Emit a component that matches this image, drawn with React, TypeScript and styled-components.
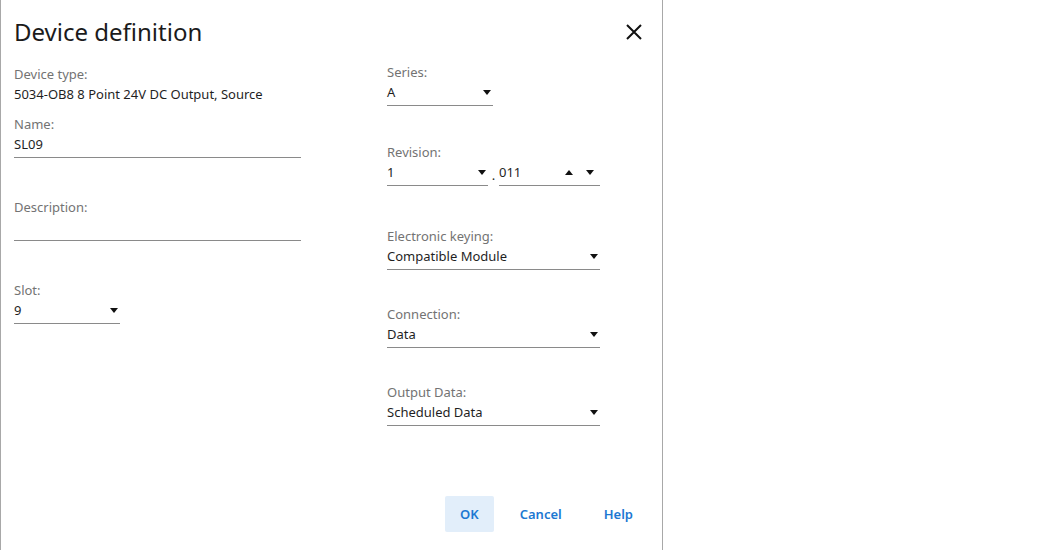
import styled, { createGlobalStyle } from 'styled-components'

const GlobalStyle = createGlobalStyle`
    html, body {
        margin: 0;
        padding: 0;
        background: #fff;
    }
    body {
        font-family: 'Noto Sans', 'Open Sans', sans-serif;
        color: #1f1f1f;
    }
`

const Dialog = styled.div`
    width: 663px;
    height: 550px;
    border-left: 1px solid #a8a8a8;
    border-right: 1px solid #a8a8a8;
    display: flex;
    flex-direction: column;
    box-sizing: border-box;
`

const Header = styled.div`
    height: 64px;
    display: flex;
    align-items: center;
    justify-content: space-between;
    padding: 0 17px 0 13px;
`

const Title = styled.h1`
    margin: 0;
    font-size: 24px;
    font-weight: 400;
    color: #1b1b1b;
    line-height: 30px;
`

const CloseButton = styled.button`
    border: 0;
    background: none;
    padding: 0;
    width: 22px;
    height: 22px;
    display: flex;
    align-items: center;
    justify-content: center;
    cursor: pointer;
`

const Body = styled.div`
    flex: 1;
    display: grid;
    grid-template-columns: 373px 213px;
    padding-left: 13px;
`

const Column = styled.div`
    display: flex;
    flex-direction: column;
`

const Field = styled.div<{ $top: number; $width: number }>`
    margin-top: ${(p) => p.$top}px;
    width: ${(p) => p.$width}px;
`

const Label = styled.div`
    font-size: 13px;
    line-height: 18px;
    margin-bottom: 1px;
    color: #737373;
`

const Value = styled.div<{ $line?: boolean }>`
    font-size: 13px;
    line-height: 20px;
    color: #1f1f1f;
    display: flex;
    align-items: center;
    ${(p) =>
        p.$line &&
        `
        padding-bottom: 3px;
        border-bottom: 1px solid #8a8a8a;
    `}
`

const Text = styled.span`
    flex: 1;
    white-space: nowrap;
`

const Arrow = styled.span`
    display: inline-flex;
    padding-right: 2px;
`

const Pair = styled.div`
    display: flex;
    align-items: flex-end;
`

const Part = styled.div<{ $width: number }>`
    width: ${(p) => p.$width}px;
`

const Dot = styled.span`
    width: 11px;
    text-align: center;
    font-size: 13px;
    line-height: 20px;
    padding-bottom: 1px;
`

const Spin = styled.span`
    display: inline-flex;
    gap: 13px;
    padding-right: 6px;
`

const Footer = styled.div`
    display: flex;
    justify-content: flex-end;
    gap: 12px;
    padding: 0 15px 18px 0;

    & > button:last-child {
        margin-left: 2px;
    }
`

const Button = styled.button<{ $primary?: boolean }>`
    height: 36px;
    padding: 0 ${(p) => (p.$primary ? 15 : 14)}px;
    border: 0;
    border-radius: 2px;
    background: ${(p) => (p.$primary ? '#e2eefa' : 'transparent')};
    color: #1c78d2;
    font-family: 'Noto Sans', sans-serif;
    font-size: 13px;
    font-weight: 600;
    cursor: pointer;
`

function Down() {
    return (
        <svg width='8' height='5' viewBox='0 0 8 5'>
            <path d='M0 0h8L4 5z' fill='#111' />
        </svg>
    )
}

function Up() {
    return (
        <svg width='8' height='5' viewBox='0 0 8 5'>
            <path d='M0 5h8L4 0z' fill='#111' />
        </svg>
    )
}

type SelectProps = {
    label: string
    value: string
    top: number
    width: number
}

function SelectField({ label, value, top, width }: SelectProps) {
    return (
        <Field $top={top} $width={width}>
            <Label>{label}</Label>
            <Value $line>
                <Text>{value}</Text>
                <Arrow>
                    <Down />
                </Arrow>
            </Value>
        </Field>
    )
}

export default function App() {
    return (
        <>
            <GlobalStyle />
            <Dialog>
                <Header>
                    <Title>Device definition</Title>
                    <CloseButton aria-label='Close'>
                        <svg width='18' height='18' viewBox='0 0 18 18'>
                            <path
                                d='M2 2L16 16M16 2L2 16'
                                stroke='#111'
                                strokeWidth='2'
                            />
                        </svg>
                    </CloseButton>
                </Header>
                <Body>
                    <Column>
                        <Field $top={1} $width={287}>
                            <Label>Device type:</Label>
                            <Value>
                                <Text>5034-OB8 8 Point 24V DC Output, Source</Text>
                            </Value>
                        </Field>
                        <Field $top={11} $width={287}>
                            <Label>Name:</Label>
                            <Value $line>
                                <Text>SL09</Text>
                            </Value>
                        </Field>
                        <Field $top={40} $width={287}>
                            <Label>Description:</Label>
                            <Value $line>
                                <Text>&nbsp;</Text>
                            </Value>
                        </Field>
                        <SelectField label='Slot:' value='9' top={40} width={106} />
                    </Column>
                    <Column>
                        <SelectField label='Series:' value='A' top={-1} width={106} />
                        <Field $top={37} $width={213}>
                            <Label>Revision:</Label>
                            <Pair>
                                <Part $width={101}>
                                    <Value $line>
                                        <Text>1</Text>
                                        <Arrow>
                                            <Down />
                                        </Arrow>
                                    </Value>
                                </Part>
                                <Dot>.</Dot>
                                <Part $width={101}>
                                    <Value $line>
                                        <Text>011</Text>
                                        <Spin>
                                            <Up />
                                            <Down />
                                        </Spin>
                                    </Value>
                                </Part>
                            </Pair>
                        </Field>
                        <SelectField
                            label='Electronic keying:'
                            value='Compatible Module'
                            top={41}
                            width={213}
                        />
                        <SelectField
                            label='Connection:'
                            value='Data'
                            top={35}
                            width={213}
                        />
                        <SelectField
                            label='Output Data:'
                            value='Scheduled Data'
                            top={35}
                            width={213}
                        />
                    </Column>
                </Body>
                <Footer>
                    <Button $primary>OK</Button>
                    <Button>Cancel</Button>
                    <Button>Help</Button>
                </Footer>
            </Dialog>
        </>
    )
}
